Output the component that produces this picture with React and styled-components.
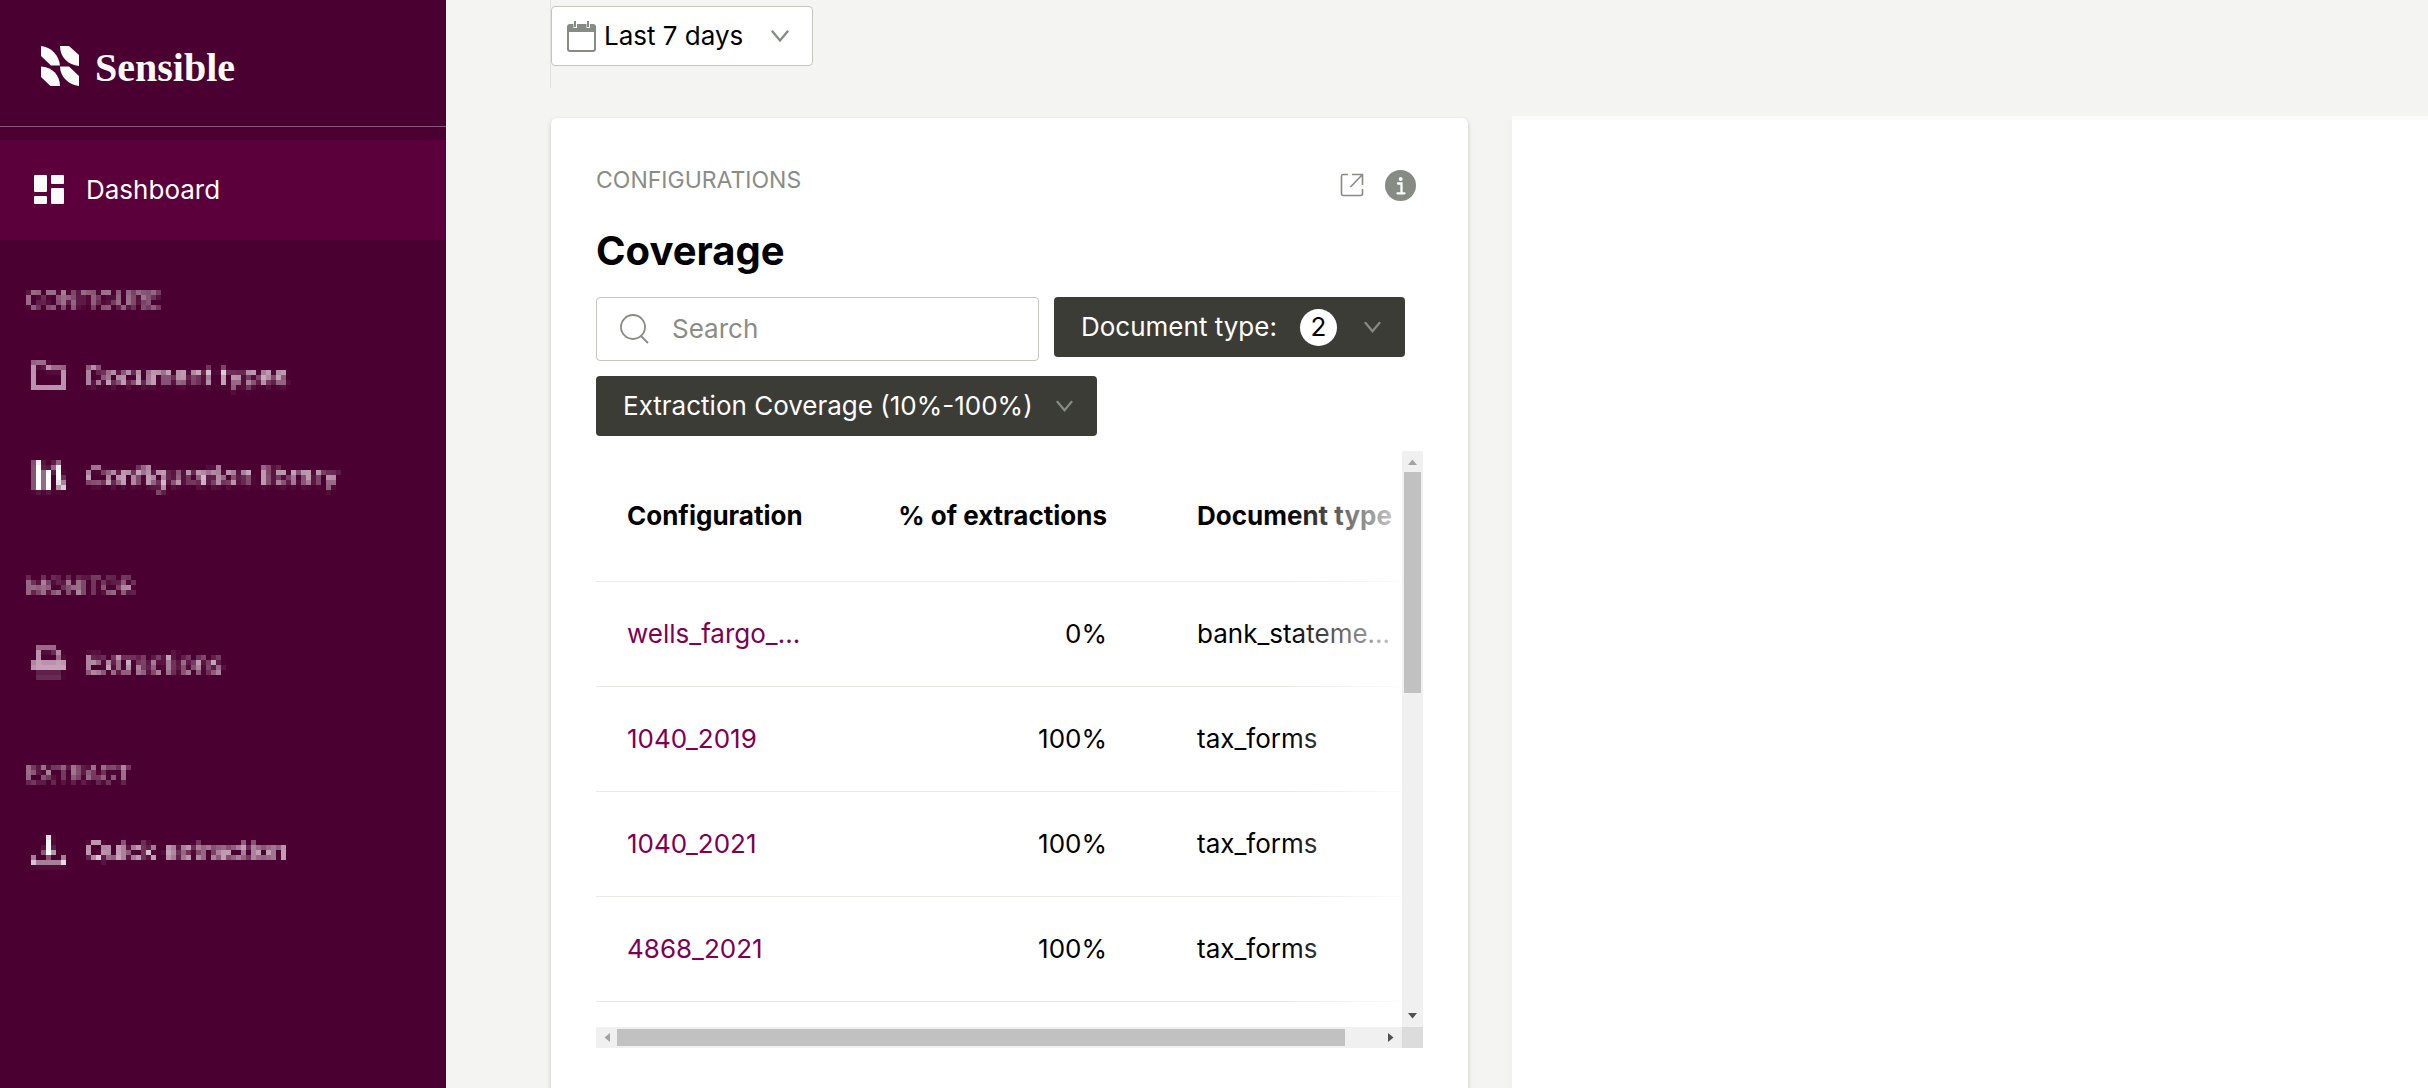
import React from "react";
import styled, { createGlobalStyle } from "styled-components";

const GlobalStyle = createGlobalStyle`
  *, *::before, *::after { box-sizing: border-box; }
  body {
    margin: 0;
    background: #f4f4f3;
    color: #000;
    font-family: Inter, "Liberation Sans", sans-serif;
    font-size: 26px;
    line-height: 32px;
  }
  button, input { font: inherit; }
`;

const Shell = styled.div`
  display: grid;
  grid-template-columns: 446px minmax(0, 1fr);
  height: 100vh;
  overflow: hidden;
`;

const Sidebar = styled.aside`
  background: #4a0030;
  color: #fafafa;
`;

const Brand = styled.a`
  display: flex;
  align-items: center;
  gap: 16px;
  height: 127px;
  padding: 6px 41px 0;
  border-bottom: 1px solid #86567a;
  color: #fafaf8;
  text-decoration: none;
`;

const Wordmark = styled.span`
  padding-top: 4px;
  font-family: "Liberation Serif", serif;
  font-size: 40px;
  font-weight: 700;
  line-height: 40px;
`;

const Primary = styled.nav`
  padding-top: 13px;
`;

const NavLink = styled.a`
  display: flex;
  align-items: center;
  gap: 19px;
  height: 100px;
  padding: 0 31px;
  background: ${(p) => (p.$active ? "#5c003c" : "transparent")};
  color: ${(p) => (p.$active ? "#fff" : "#f8e8f2")};
  text-decoration: none;

  svg { flex: none; }
`;

const Muted = styled.nav`
  filter: url(#mosaic);
`;

const NavHeading = styled.h2`
  height: 87px;
  margin: 0;
  padding: 44px 26px 0;
  color: #c9b0bf;
  font-size: 23px;
  font-weight: 400;
  line-height: 32px;
`;

const Main = styled.main`
  overflow: auto;
  scrollbar-width: none;
  padding-left: 104px;
`;

const Toolbar = styled.div`
  display: flex;
  align-items: flex-start;
  height: 88px;
  padding-top: 6px;
  border-left: 1px solid #e2e2e0;
  margin-bottom: 30px;
`;

const RangeButton = styled.button`
  display: flex;
  align-items: center;
  width: 262px;
  height: 60px;
  padding: 0 15px;
  border: 1px solid #c4c7be;
  border-radius: 4px;
  background: #fff;
  color: #000;

  span { flex: 1; padding-left: 8px; text-align: left; }
  > svg:last-child { margin-right: 8px; }
`;

const Cards = styled.div`
  display: grid;
  grid-template-columns: repeat(2, minmax(0, 917px));
  gap: 44px;
  padding-left: 1px;
`;

const Card = styled.section`
  padding: 45px;
  border-radius: 6px;
  background: #fff;
  box-shadow: 0 2px 5px rgba(0, 0, 0, 0.18);
`;

const BlankCard = styled.section`
  margin-top: 2px;
  background: #fff;
  box-shadow: 0 -4px 0 #fbfbfa, -5px 0 0 #f1f1ef;
`;

const CardTop = styled.header`
  display: flex;
  justify-content: space-between;
  height: 64px;
`;

const Eyebrow = styled.p`
  margin: 0;
  color: #898d86;
  font-size: 23px;
  line-height: 34px;
`;

const Actions = styled.div`
  display: flex;
  align-items: center;
  gap: 21px;
  height: 44px;
  padding-right: 7px;
`;

const IconButton = styled.button`
  display: flex;
  padding: 0;
  border: 0;
  background: none;
  color: #868b84;
`;

const Title = styled.h1`
  margin: 0 0 22px;
  font-size: 40px;
  font-weight: 700;
  line-height: 48px;
`;

const Filters = styled.div`
  display: flex;
  flex-wrap: wrap;
  align-items: flex-start;
  gap: 15px;
  margin-bottom: 15px;
`;

const SearchBox = styled.label`
  display: flex;
  align-items: center;
  gap: 23px;
  width: 443px;
  height: 64px;
  padding: 0 23px;
  border: 1px solid #c4c7be;
  border-radius: 4px;

  svg { flex: none; }
  input {
    flex: 1;
    min-width: 0;
    padding: 0;
    border: 0;
    outline: 0;
    background: none;
  }
  input::placeholder { color: #898d86; opacity: 1; }
`;

const FilterButton = styled.button`
  display: flex;
  align-items: center;
  height: 60px;
  padding: 0 24px 0 27px;
  border: 0;
  border-radius: 4px;
  background: #3c3c36;
  color: #fff;

  svg { margin-left: ${(p) => (p.$counted ? "27px" : "23px")}; }
`;

const Count = styled.span`
  display: grid;
  place-items: center;
  width: 37px;
  height: 37px;
  margin-left: 23px;
  border-radius: 50%;
  background: #fff;
  color: #000;
`;

const Scroller = styled.div`
  display: grid;
  grid-template-columns: minmax(0, 1fr) 21px;
  grid-template-rows: 576px 21px;
`;

const Viewport = styled.div`
  position: relative;
  min-width: 0;
  overflow: hidden;

  &::after {
    content: "";
    position: absolute;
    top: 0;
    right: 0;
    bottom: 0;
    width: 115px;
    background: linear-gradient(90deg, rgba(255, 255, 255, 0), rgba(255, 255, 255, 0.84));
    pointer-events: none;
  }
`;

const Table = styled.table`
  width: 845px;
  table-layout: fixed;
  border-collapse: collapse;
`;

const Col = styled.col`
  width: ${(p) => p.$w};
`;

const Head = styled.th`
  height: 130px;
  padding: 0 45px;
  padding-left: ${(p) => (p.$first ? "31px" : "45px")};
  border-bottom: 1px solid #e8e8e8;
  font-weight: 700;
  text-align: ${(p) => (p.$right ? "right" : "left")};
  white-space: nowrap;
`;

const Cell = styled.td`
  height: 105px;
  padding: 0 45px;
  padding-left: ${(p) => (p.$first ? "31px" : "45px")};
  border-bottom: 1px solid #e8e8e5;
  text-align: ${(p) => (p.$right ? "right" : "left")};
  white-space: nowrap;

  a { color: #7d0055; text-decoration: none; }
`;

const Bar = styled.div`
  display: flex;
  flex-direction: ${(p) => (p.$vertical ? "column" : "row")};
  align-items: center;
  background: #f0f0f0;

  svg { flex: none; }
`;

const Track = styled.div`
  display: flex;
  flex: 1;
  flex-direction: ${(p) => (p.$vertical ? "column" : "row")};
`;

const Thumb = styled.div`
  width: ${(p) => (p.$vertical ? "17px" : "95.4%")};
  height: ${(p) => (p.$vertical ? "221px" : "17px")};
  background: #c1c1c1;
`;

const Corner = styled.div`
  background: #dcdcdc;
`;

const Logo = () => (
  <svg width="38" height="40" viewBox="0 0 38 40" fill="currentColor" aria-hidden="true">
    <path d="M0 0C10 1 18 9 19 19.500H10L0 10Z" />
    <path d="M19 0H28L38 9V20C27 19 19 11 19 0Z" />
    <path d="M0 20.500C11 21 19 29 19 40H9.500L0 31Z" />
    <path d="M19 20.500H28L38 30V40C28 39 19 31 19 20.500Z" />
  </svg>
);

const Chevron = ({ width = 18 }) => (
  <svg width={width} height="13" viewBox="0 0 18 13" fill="none" stroke="#868b84" strokeWidth="2.300" strokeLinecap="round" aria-hidden="true">
    <path d="M1.500 1.500 9 10.500 16.500 1.500" />
  </svg>
);

const Arrow = ({ turn, dim }) => (
  <svg width="21" height="21" viewBox="0 0 21 21" fill={dim ? "#a3a3a3" : "#505050"} aria-hidden="true">
    <path transform={`rotate(${turn} 10.500 10.500)`} d="M10.500 8.500 15 14H6Z" />
  </svg>
);

const DashboardIcon = () => (
  <svg width="36" height="36" viewBox="0 0 36 36" fill="#fafaf8" aria-hidden="true">
    <rect x="3" y="3" width="13" height="17" rx="1" />
    <rect x="20" y="3" width="13" height="9" rx="1" />
    <rect x="3" y="24" width="13" height="8" rx="1" />
    <rect x="20" y="16" width="13" height="16" rx="1" />
  </svg>
);

const FolderIcon = () => (
  <svg width="36" height="36" viewBox="0 0 36 36" fill="none" stroke="#c69fb8" strokeWidth="4" aria-hidden="true">
    <path d="M3 5H14L18 10H32V29H3Z" />
  </svg>
);

const LibraryIcon = () => (
  <svg width="36" height="36" viewBox="0 0 36 36" fill="#fff" aria-hidden="true">
    <path d="M3 2H11V32H3ZM13 10H20V32H13ZM22 5 28 3 34 30 28 32Z" />
  </svg>
);

const InboxIcon = () => (
  <svg width="36" height="36" viewBox="0 0 36 36" aria-hidden="true">
    <path d="M7 18V3H23L29 9V18" fill="none" stroke="#c69fb8" strokeWidth="4" />
    <path d="M1 15H35V24H1Z" fill="#c69fb8" />
    <path d="M5 26H31V33H5Z" fill="#6a3055" />
  </svg>
);

const DownloadIcon = () => (
  <svg width="36" height="36" viewBox="0 0 36 36" fill="none" stroke="#fff" aria-hidden="true">
    <path d="M18 3V20" strokeWidth="5" />
    <path d="M10 16H26L18 25Z" fill="#fff" stroke="none" />
    <path d="M3 24V31H33V24" strokeWidth="3" />
  </svg>
);

const CalendarIcon = () => (
  <svg width="29" height="32" viewBox="0 0 29 32" aria-hidden="true">
    <rect x="1" y="5" width="27" height="26" rx="2" fill="#fff" stroke="#868b84" strokeWidth="2" />
    <path d="M1 5H28V12H1Z" fill="#868b84" />
    <path d="M6.500 0V8H10V0ZM19.500 0V8H23V0Z" fill="#fff" />
    <path d="M7 1H9V7H7ZM20 1H22V7H20Z" fill="#868b84" />
  </svg>
);

const ExternalIcon = () => (
  <svg width="24" height="24" viewBox="0 0 24 24" fill="none" stroke="currentColor" strokeWidth="1.600" aria-hidden="true">
    <path d="M8 1.500H3Q1.500 1.500 1.500 3V21Q1.500 22.500 3 22.500H21Q22.500 22.500 22.500 21V16M12 1.500H22.500V12M22 2 10.500 14" />
  </svg>
);

const InfoIcon = () => (
  <svg width="31" height="31" viewBox="0 0 31 31" aria-hidden="true">
    <circle cx="15.500" cy="15.500" r="15.500" fill="currentColor" />
    <circle cx="15.700" cy="9" r="2" fill="#fff" />
    <path d="M13 13.500H16.500V23M12.500 23.300H19.500" fill="none" stroke="#fff" strokeWidth="2.300" strokeLinecap="round" />
  </svg>
);

const SearchIcon = () => (
  <svg width="29" height="30" viewBox="0 0 29 30" fill="none" stroke="#868b84" strokeWidth="1.800" aria-hidden="true">
    <circle cx="13" cy="13" r="12" />
    <path d="M21 22 28 29" />
  </svg>
);

/* Averages the artwork into 5px blocks. */
const MosaicFilter = () => (
  <svg width="0" height="0" style={{ display: "block" }} aria-hidden="true">
    <filter id="mosaic" x="0" y="0" width="1" height="1" primitiveUnits="userSpaceOnUse" colorInterpolationFilters="sRGB">
      <feGaussianBlur in="SourceGraphic" stdDeviation="1.200" result="soft" />
      <feFlood x="3" y="2" width="1" height="1" floodColor="#000" result="point" />
      <feOffset in="point" x="1" y="0" width="5" height="5" dx="0" dy="0" result="block" />
      <feTile in="block" result="grid" />
      <feComposite in="soft" in2="grid" operator="in" result="samples" />
      <feMorphology in="samples" operator="dilate" radius="2" />
    </filter>
  </svg>
);

const sections = [
  {
    title: "CONFIGURE",
    links: [
      { label: "Document types", Icon: FolderIcon },
      { label: "Configuration library", Icon: LibraryIcon },
    ],
  },
  { title: "MONITOR", links: [{ label: "Extractions", Icon: InboxIcon }] },
  { title: "EXTRACT", links: [{ label: "Quick extraction", Icon: DownloadIcon }] },
];

const rows = [
  { name: "wells_fargo_...", share: "0%", type: "bank_stateme..." },
  { name: "1040_2019", share: "100%", type: "tax_forms" },
  { name: "1040_2021", share: "100%", type: "tax_forms" },
  { name: "4868_2021", share: "100%", type: "tax_forms" },
];

export default function App() {
  return (
    <>
      <GlobalStyle />
      <MosaicFilter />
      <Shell>
        <Sidebar>
          <Brand href="#">
            <Logo />
            <Wordmark>Sensible</Wordmark>
          </Brand>
          <Primary>
            <NavLink href="#" $active aria-current="page">
              <DashboardIcon />
              <span>Dashboard</span>
            </NavLink>
          </Primary>
          <Muted>
            {sections.map(({ title, links }) => (
              <React.Fragment key={title}>
                <NavHeading>{title}</NavHeading>
                {links.map(({ label, Icon }) => (
                  <NavLink href="#" key={label}>
                    <Icon />
                    <span>{label}</span>
                  </NavLink>
                ))}
              </React.Fragment>
            ))}
          </Muted>
        </Sidebar>
        <Main>
          <Toolbar>
            <RangeButton type="button">
              <CalendarIcon />
              <span>Last 7 days</span>
              <Chevron />
            </RangeButton>
          </Toolbar>
          <Cards>
            <Card>
              <CardTop>
                <Eyebrow>CONFIGURATIONS</Eyebrow>
                <Actions>
                  <IconButton type="button" aria-label="Open">
                    <ExternalIcon />
                  </IconButton>
                  <IconButton type="button" aria-label="Info">
                    <InfoIcon />
                  </IconButton>
                </Actions>
              </CardTop>
              <Title>Coverage</Title>
              <Filters>
                <SearchBox>
                  <SearchIcon />
                  <input type="search" placeholder="Search" aria-label="Search" />
                </SearchBox>
                <FilterButton type="button" $counted>
                  Document type:
                  <Count>2</Count>
                  <Chevron width={17} />
                </FilterButton>
                <FilterButton type="button">
                  Extraction Coverage (10%-100%)
                  <Chevron width={17} />
                </FilterButton>
              </Filters>
              <Scroller>
                <Viewport>
                  <Table>
                    <colgroup>
                      <Col $w="256px" />
                      <Col $w="300px" />
                      <Col $w="auto" />
                    </colgroup>
                    <thead>
                      <tr>
                        <Head $first>Configuration</Head>
                        <Head $right>% of extractions</Head>
                        <Head>Document type</Head>
                      </tr>
                    </thead>
                    <tbody>
                      {rows.map((row) => (
                        <tr key={row.name}>
                          <Cell $first>
                            <a href="#">{row.name}</a>
                          </Cell>
                          <Cell $right>{row.share}</Cell>
                          <Cell>{row.type}</Cell>
                        </tr>
                      ))}
                    </tbody>
                  </Table>
                </Viewport>
                <Bar $vertical aria-hidden="true">
                  <Arrow turn={0} dim />
                  <Track $vertical>
                    <Thumb $vertical />
                  </Track>
                  <Arrow turn={180} />
                </Bar>
                <Bar aria-hidden="true">
                  <Arrow turn={-90} dim />
                  <Track>
                    <Thumb />
                  </Track>
                  <Arrow turn={90} />
                </Bar>
                <Corner />
              </Scroller>
            </Card>
            <BlankCard />
          </Cards>
        </Main>
      </Shell>
    </>
  );
}
